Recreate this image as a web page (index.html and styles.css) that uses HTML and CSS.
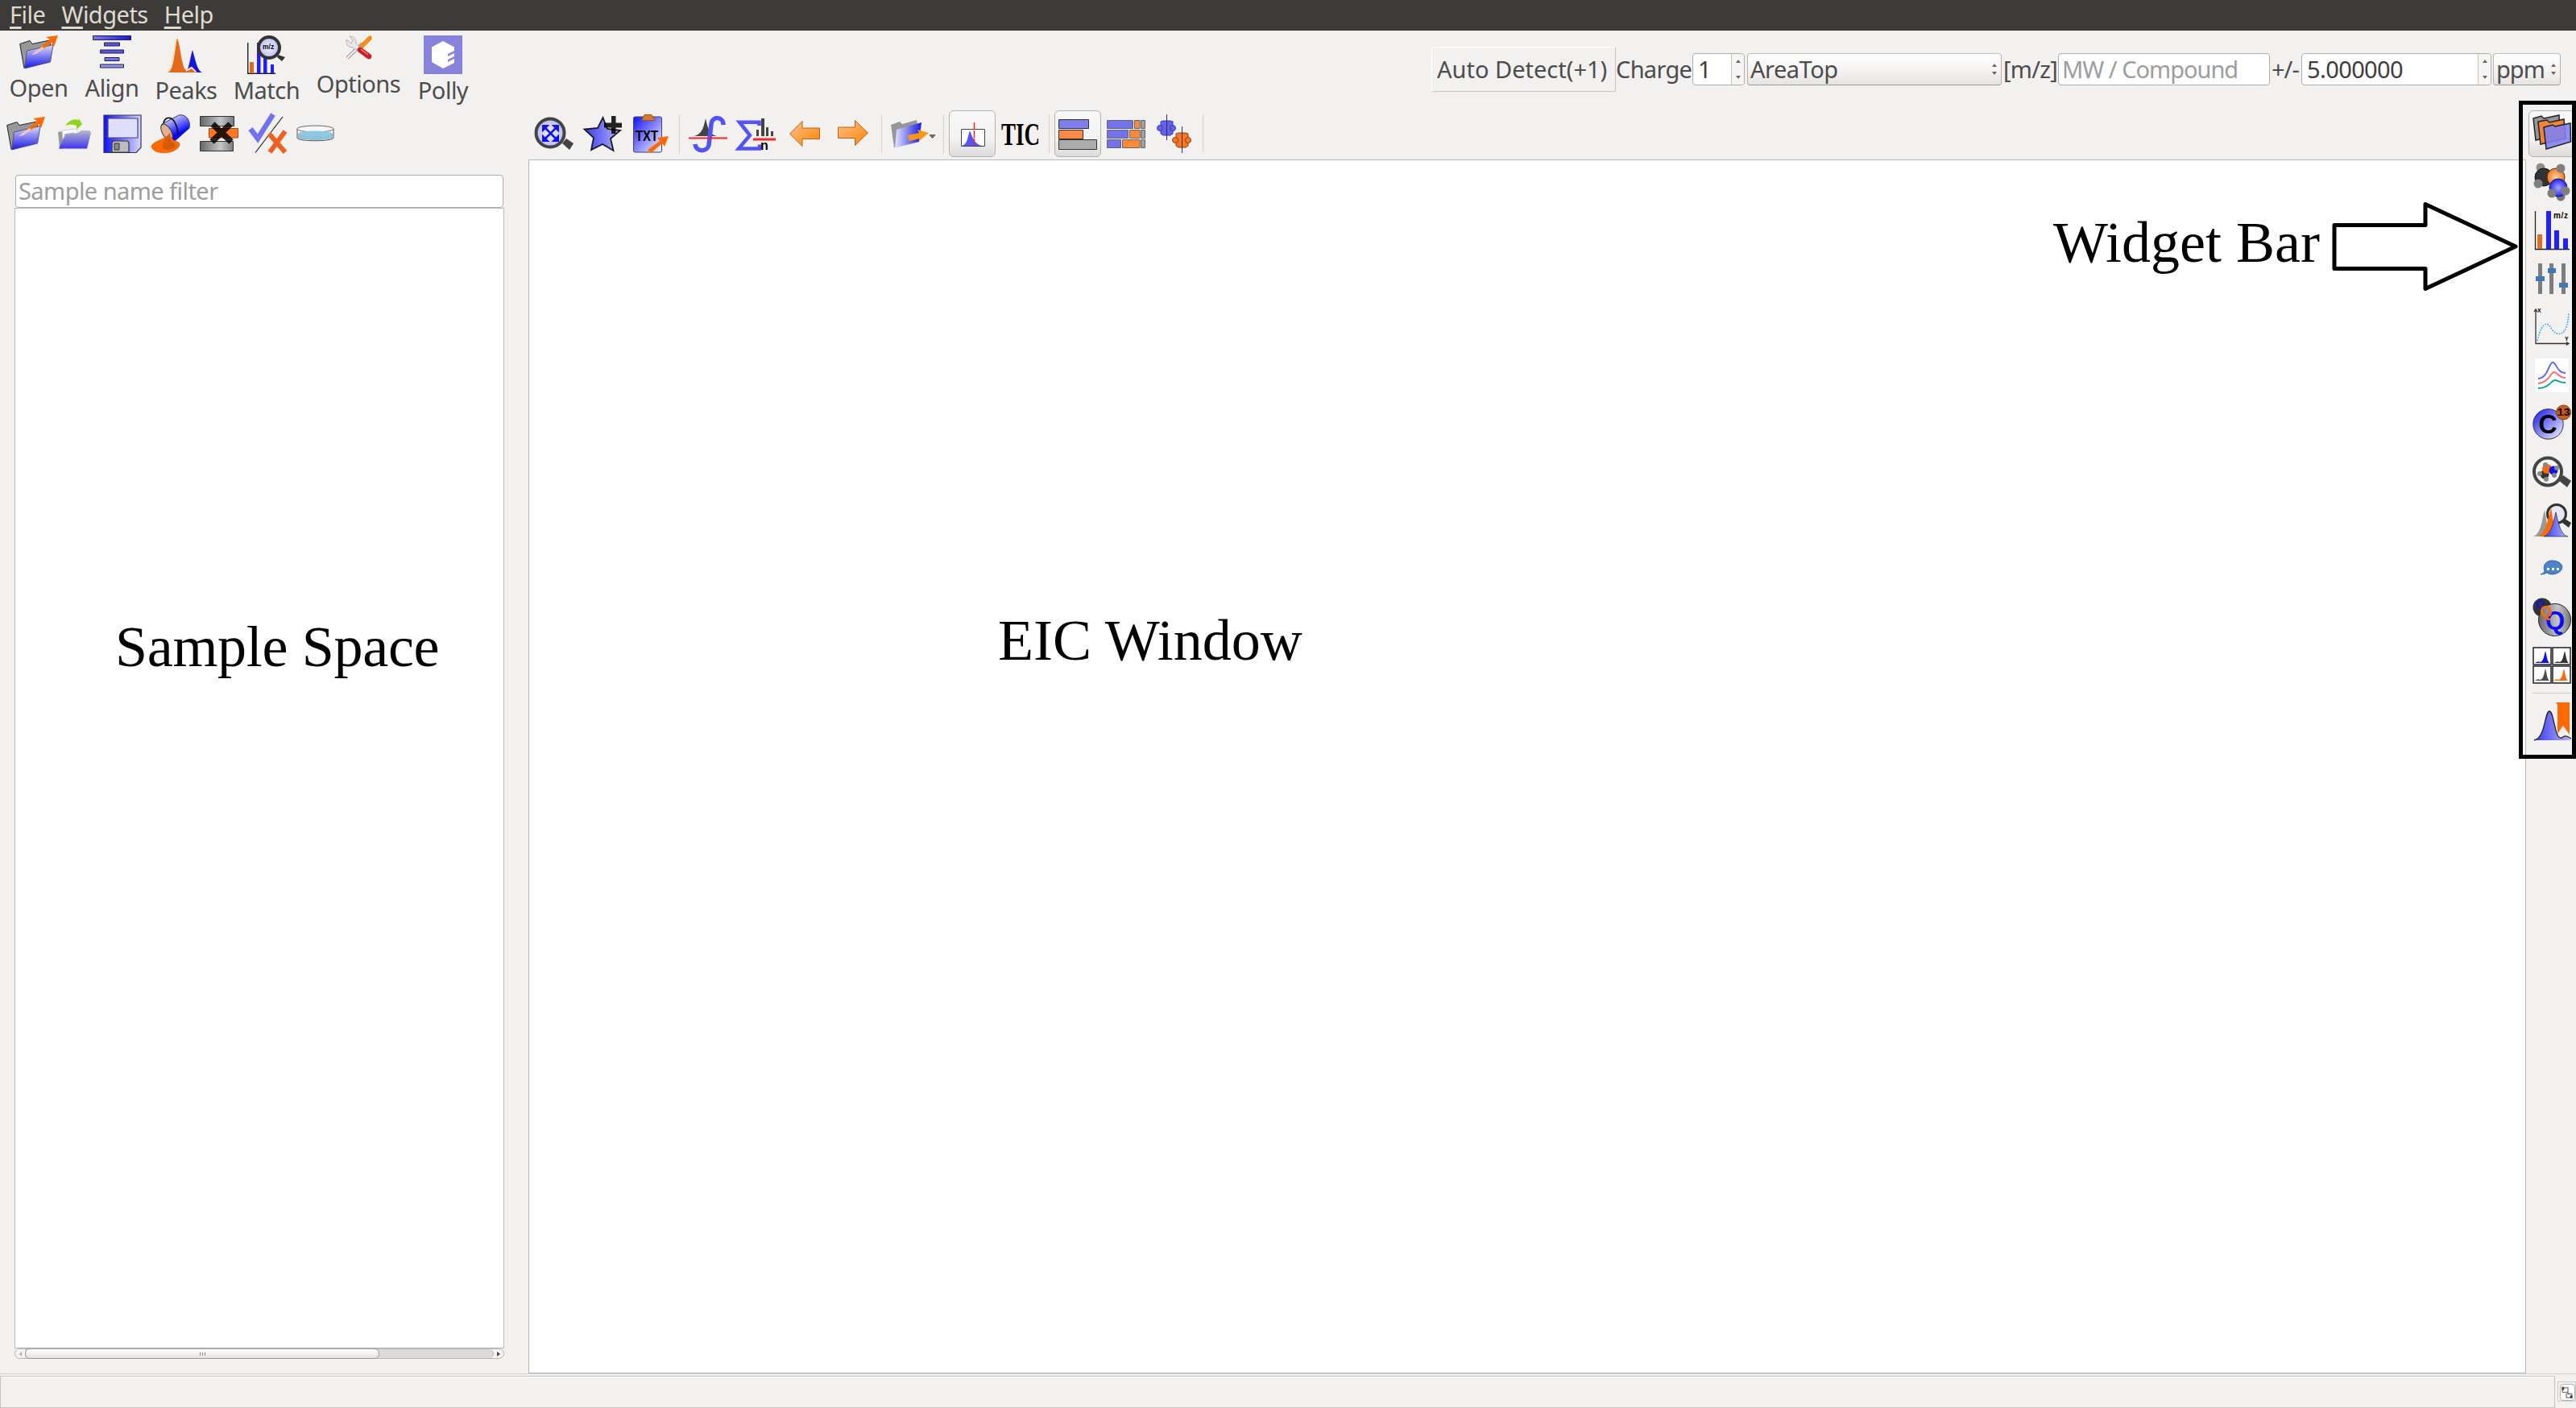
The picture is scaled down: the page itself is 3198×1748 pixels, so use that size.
FILE: index.html
```html
<!DOCTYPE html>
<html lang="en">
<head>
<meta charset="utf-8">
<title>Sample Workspace</title>
<link rel="stylesheet" href="styles.css">
</head>
<body>
<svg class="defs" width="0" height="0" aria-hidden="true">
  <defs>
    <linearGradient id="blueDown" x1="0" y1="0" x2="0" y2="1"><stop offset="0" stop-color="#dcdcfb"/><stop offset="1" stop-color="#1717e6"/></linearGradient>
    <linearGradient id="blueRight"><stop offset="0" stop-color="#1010ff"/><stop offset="1" stop-color="#d8d8fa"/></linearGradient>
    <linearGradient id="blueLeft"><stop offset="0" stop-color="#e4e4fc"/><stop offset="1" stop-color="#1818e8"/></linearGradient>
    <linearGradient id="blueDiag" x1="0" y1="0" x2="1" y2="1"><stop offset="0" stop-color="#1212ff"/><stop offset=".9" stop-color="#e2e2fa"/></linearGradient>
    <linearGradient id="star"><stop offset="0" stop-color="#3a3af0"/><stop offset="1" stop-color="#b4b4f8"/></linearGradient>
    <linearGradient id="bar"><stop offset="0" stop-color="#7a7aff"/><stop offset="1" stop-color="#1616ee"/></linearGradient>
    <linearGradient id="steel"><stop offset="0" stop-color="#666"/><stop offset=".6" stop-color="#c4c5c9"/><stop offset="1" stop-color="#77777a"/></linearGradient>
    <linearGradient id="orangeArrow" x1="0" y1="0" x2="1" y2="1"><stop offset="0" stop-color="#ffc08a"/><stop offset="1" stop-color="#f98500"/></linearGradient>
    <linearGradient id="greenFolder" x1="0" y1="0" x2="0" y2="1"><stop offset="0" stop-color="#b8b8c4"/><stop offset="1" stop-color="#4034f4"/></linearGradient>
    <linearGradient id="bucket" x1="0" y1="0" x2=".5" y2="1"><stop offset=".1" stop-color="#f0f0ff"/><stop offset=".8" stop-color="#0606ff"/></linearGradient>
    <radialGradient id="lens"><stop offset="0" stop-color="#f4f4ff"/><stop offset="1" stop-color="#b9b9f7"/></radialGradient>
    <radialGradient id="orangeBall"><stop offset="0" stop-color="#ffd2b0"/><stop offset="1" stop-color="#fb7514"/></radialGradient>
    <radialGradient id="blueBall"><stop offset="0" stop-color="#a9a9ff"/><stop offset="1" stop-color="#2626f4"/></radialGradient>
    <symbol id="openFolder" viewBox="0 0 48 48">
      <path d="M.7 13.5 13 9.5l3 4L38 9l1 8-33 26.500z" fill="#989898" stroke="#222"/>
      <path d="M9.500 22 42 14.500 38.500 36 6.500 44z" fill="url(#blueDown)" stroke="#557"/>
      <path d="m26 18 12-10-5-3 15-2-5 14-3-5-9 7z" fill="#ff6a00"/>
      <path d="m15 27 13-10 3 2-10 7z" fill="#f9c3bd"/>
    </symbol>
  </defs>
</svg>

<nav class="menubar"><span><u>F</u>ile</span><span><u>W</u>idgets</span><span><u>H</u>elp</span></nav>

<header class="topbar">
  <div class="actions">
    <div class="action open"><svg class="icon" viewBox="0 3 48 48"><use href="#openFolder" width="48" height="48"/></svg><span>Open</span></div>
    <div class="action align"><svg class="icon" viewBox="0 0 48 48"><g fill="url(#bar)" stroke="#223"><path d="M.5.5h47v5H.5z"/><path d="M14.500 9h19v4h-19zM9.500 18h29v4h-29z" fill="#5454f0"/><path d="M15 27.500h18v4H15z" fill="#7272f4"/><path d="M9.500 36h29v4h-29z" fill="#9696f6"/></g></svg><span>Align</span></div>
    <div class="action peaks low"><svg class="icon" viewBox="0 0 48 48"><path d="M22 46c6-2 6-15 10-28 4 14 6 26 12 28z" fill="#1515e0"/><path d="M1 46C9 44 9 22 13 3c5 13 5 36 11 40 4-2 5-5 7-4s5 6 8 7z" fill="#e5691b"/><path d="M12 4C8 18 8 38 2 45" fill="none" stroke="#ffe08a"/><path d="m24 44 7-4 5 5" fill="none" stroke="#fff" stroke-width="1.500"/></svg><span>Peaks</span></div>
    <div class="action match low"><svg class="icon" viewBox="0 0 48 48"><path d="M.7 9v38.300H35" fill="none" stroke="#222" stroke-width="1.400"/><path d="M3 33h5v14H3z" fill="#dc6b27"/><path d="M12 9h4.500v38H12zM20 28h4.500v19H20zM29 36h4v11h-4z" fill="#1f1fff"/><circle cx="27" cy="15" r="13" fill="url(#lens)" stroke="#333" stroke-width="4"/><path d="m38 24 9 3-4 5-6-5z" fill="#333"/><text x="19" y="17" font-size="8.500" font-weight="700">m/z</text></svg><span>Match</span></div>
    <div class="action options high"><svg class="icon" viewBox="0 0 48 48"><path d="m10 28 19-18" stroke="#777" stroke-width="4"/><path d="m10 28 19-18" stroke="#eee" stroke-width="2.500"/><path d="M9 5q-1 10 8 10l4 3 4-4-4-4Q21 1 13 1l4 5-2 4z" fill="#e8e8e8" stroke="#999" stroke-width=".7"/><path d="m25 13 12-12h3v4L28 17z" fill="#ff8c14" stroke="#c70" stroke-width=".6"/><path d="m26 18 11 8" stroke="#c81e25" stroke-width="6.500" stroke-linecap="round"/><path d="m27 17 9 7" stroke="#f08080" stroke-width="1.500"/></svg><span>Options</span></div>
    <div class="action polly low"><svg class="icon" viewBox="0 0 48 48"><path d="M0 0h48v48H0z" fill="#8783dc"/><path d="m24 7 14 7.500v4.500l-8 4v3l8-4v4l-8 4v3l8-4v5L24 41 10 33V14.500z" fill="#fff"/></svg><span>Polly</span></div>
  </div>
  <div class="query">
    <div class="detect">Auto Detect(+1)</div>
    <span class="lbl charge-l">Charge</span>
    <div class="spin charge"><span>1</span><i class="steps wide"></i></div>
    <div class="combo area"><span>AreaTop</span><i class="steps"></i></div>
    <span class="lbl mz-l">[m/z]</span>
    <div class="field compound">MW / Compound</div>
    <span class="lbl pm-l">+/-</span>
    <div class="spin tolerance"><span>5.000000</span><i class="steps wide"></i></div>
    <div class="combo unit"><span>ppm</span><i class="steps"></i></div>
  </div>
</header>

<main class="workspace">
  <aside class="samples">
    <div class="tools">
      <svg class="icon" viewBox="0 0 48 48"><use href="#openFolder" width="48" height="48"/></svg>
      <svg class="icon" viewBox="0 0 48 48"><path d="m4 22 3-1 4 2v19l-5 1z" fill="#999"/><path d="m9 20 16-2 6 6-20 14z" fill="#f8f8fa" stroke="#ccd"/><path d="m12 25 12-2M12 28l10-2" stroke="#7aa6c8"/><path d="m15 24 14-1 4-3h10l2 3-5 19.500H5L13 25z" fill="url(#greenFolder)"/><path d="M13 14q7-10 17-7l-1-3 5 8-7 7v-5q-7-3-14 0z" fill="#8fd41c"/></svg>
      <svg class="icon" viewBox="0 0 48 48"><path d="M1 1h46v40l-6 6.500H1z" fill="url(#blueRight)" stroke="#335" stroke-width="1.200"/><path d="M6 5h37v24H6z" fill="#dedefd" stroke="#446" stroke-width="1.200"/><path d="M11 47V35l2-2h17l2 2v12z" fill="#bdbdbf" stroke="#333" stroke-width="1.200"/><path d="M14 36h6v8h-6z" fill="#888" stroke="#333"/></svg>
      <svg class="icon" viewBox="0 0 48 48"><path d="M13 12 34 1c9-2 15 7 13 16L28 34z" fill="url(#bucket)" stroke="#336"/><ellipse cx="19" cy="22" rx="5.500" ry="11" transform="rotate(-30 19 22)" fill="#e4b193" stroke="#333"/><path d="M23 23c-4 8-22 10-23 17 2 9 21 10 30 4 5-3 6-7 4-9-5-3-11-3-11-12z" fill="#ff6a00" stroke="#b50" stroke-width=".6"/><path d="M22 25q-10 10-8 17 9 6 18-4-9-3-10-13z" fill="#d55c06"/><path d="M15 11c2-9 11-9 15 1 2 5 3 9 3 13" fill="none" stroke="#111" stroke-width="1.700"/></svg>
      <svg class="icon" viewBox="0 0 48 48"><path d="M.5 2.500h42v12H.5zM.5 33.500h41v12H.5z" fill="url(#steel)" stroke="#333"/><path d="M11.500 17.500h36V29h-36z" fill="#ff7620" stroke="#a54a14"/><path d="m16 12 23 22M38 12 15 34" stroke="#000" stroke-opacity=".84" stroke-width="7.500"/></svg>
      <svg class="icon" viewBox="0 0 48 48"><path d="m3 18 9 12L31 0" fill="none" stroke="#7371ef" stroke-width="6.500"/><path d="M43 3 9 47.500" stroke="#222" stroke-width="1.200"/><path d="m26 24 20 23M46 21 27 47" stroke="#ed6221" stroke-width="6"/></svg>
      <svg class="icon" viewBox="0 0 48 48"><path d="M1 18v11c0 5 45 5 45 0V18z" fill="#fbfbfb" stroke="#555"/><path d="M2 24v5c0 4 43 4 43 0v-5c-3-4-40-4-43 0z" fill="#8ec2db"/><ellipse cx="23.500" cy="18" rx="22.500" ry="4" fill="#f7f7f7" stroke="#666"/><ellipse cx="23.500" cy="24" rx="21" ry="3.500" fill="#8fc8e0"/></svg>
    </div>
    <div class="filter">Sample name filter</div>
    <div class="list"></div>
    <div class="scroll"><span class="tri left"></span><div class="track"><div class="thumb"><i></i><i></i><i></i></div></div><span class="tri right"></span></div>
    <p class="note note-samples">Sample Space</p>
  </aside>

  <section class="eic">
    <div class="tools">
      <svg class="icon" viewBox="0 0 48 48"><circle cx="19" cy="23" r="17.500" fill="url(#lens)" stroke="#444" stroke-width="4"/><path d="m34 36 5-6 9 6-5 8z" fill="#444"/><g fill="#1111ee" stroke="#1111ee" stroke-width="2"><path d="m12 16 15 15M27 16 12 31" stroke-width="2.500"/><path d="M10 14h6l-6 6zM23 14h6v6zM10 27v6h6zM29 27v6h-6z"/></g></svg>
      <svg class="icon" viewBox="0 0 48 48"><path d="m24.500 4 5.500 14 16 2-12 10 3.500 15-13.500-8L10 44l3-15L1.500 18.500 18 17z" fill="url(#star)" stroke="#1a1a22" stroke-width="1.800"/><path d="M35 2h5.500v8.500H48v6h-7.500V24H35v-7.500h-9v-6h9z" fill="#000" fill-opacity=".86"/></svg>
      <svg class="icon" viewBox="0 0 48 48"><rect x="2.500" y="3" width="35" height="44" rx="2" fill="url(#blueDiag)" stroke="#446"/><path d="M13 7.500 16 .5h9l4 7z" fill="#d57a2c" stroke="#a65312"/><text x="5" y="33" font-size="18" font-weight="700" textLength="28" lengthAdjust="spacingAndGlyphs">TXT</text><path d="m20 44 15-11-3-4 14-2-5 13-3-4-14 12z" fill="#ff6a00"/></svg>
      <i class="sep"></i>
      <svg class="icon" viewBox="0 0 48 48"><path d="M7 27c9-3 11-9 14-22 3 14 5 20 14 22z" fill="#444"/><path d="M43 13c0-11-14-11-15-1l-3 26c-2 9-16 9-17-1" fill="none" stroke="#5252fa" stroke-width="5.500"/><path d="M0 29.500h48" stroke="#f8222c" stroke-width="2.200"/></svg>
      <svg class="icon" viewBox="0 0 48 48"><path d="M27.500 14V9.700H3L16 26 2 42.500h26v-5" fill="none" stroke="#5454fa" stroke-width="4.500"/><path d="M24 19h3v8h-3zM30 5h4v22h-4zM36 16h3v11h-3zM42 21h3v6h-3z" fill="#444"/><path d="M20 31h28" stroke="#fb2429" stroke-width="3"/><text x="29" y="43.500" font-size="16" font-weight="700">n</text></svg>
      <svg class="icon" viewBox="0 0 48 48"><path d="M5.500 24 21 8.500v8.500h21.500v13.500H21v9z" fill="url(#orangeArrow)" stroke="#b8621b"/></svg>
      <svg class="icon" viewBox="0 0 48 48"><path d="M42.500 23 26.500 7.500v8.500H5.500v13.500h21v9z" fill="url(#orangeArrow)" stroke="#b8621b"/></svg>
      <i class="sep"></i>
      <svg class="icon drop" viewBox="0 0 60 48"><path d="M0 13 11 9l3 3 18-5 1 5L8 41 4 41z" fill="#969696"/><path d="M7 19 38 10 35 34 5 41.500z" fill="url(#blueLeft)"/><path d="m21 26 14-3-2-4 14 4-12 10v-3l-12 3z" fill="#fb980b"/><path d="M48 25.500h7l-3.500 4z" fill="#777" stroke="#555"/></svg>
      <i class="sep"></i>
      <div class="toggle"><svg class="icon" viewBox="0 0 48 48"><path d="M10.500 18.500h29v21h-29z" fill="#fff" stroke="#444"/><path d="M11 39c7-2 7-10 10-19 4 10 6 17 15 19z" fill="#5454fb"/><path d="M26.500 10v28" stroke="#f3232b" stroke-width="1.500" stroke-dasharray="9 1"/></svg></div>
      <svg class="icon tic" viewBox="0 0 48 48"><text x="0" y="38" font-size="40" font-weight="700" textLength="48" lengthAdjust="spacingAndGlyphs">TIC</text></svg>
      <i class="sep"></i>
      <div class="toggle"><svg class="icon" viewBox="0 0 48 48"><g stroke="#333"><path d="M.5 6.500h37v11H.5z" fill="#7d7df0"/><path d="M.5 19.500h30v11H.5z" fill="#fb8b46"/><path d="M.5 31.500h47v12H.5z" fill="#acacac"/></g></svg></div>
      <svg class="icon" viewBox="0 0 48 48"><g stroke="#666"><g fill="#7272ee"><path d="M.5 7.500h32v10H.5zM.5 19.500h26v10H.5zM.5 31.500h17v10H.5z"/></g><g fill="#ff8a36"><path d="M34.500 7.500H41v10h-6.500zM28.500 19.500H41v10H28.500zM19.500 31.500H41v10H19.500z"/></g><path d="M42.500 7.500h5v10h-5zM42.500 19.500h5v10h-5zM42.500 31.500h5v10h-5z" fill="#a0a0a0"/></g></svg>
      <svg class="icon" viewBox="0 0 48 48"><g fill="#6262ef" stroke="#3a3ab8"><path d="m7 9 3-1h9l3 1v15l-3 2h-9l-3-2z"/><circle cx="6" cy="17" r="3.500"/><circle cx="22" cy="17" r="3.500"/></g><g fill="#ff751d" stroke="#7c4424"><path d="m26 24 3-1h9l3 1v15l-3 2h-9l-3-2z"/><circle cx="25" cy="32" r="3.500"/><circle cx="41" cy="32" r="3.500"/></g><path d="M14.500 0v32M33.500 15v33" stroke="#333"/></svg>
      <i class="sep"></i>
    </div>
    <div class="plot">
      <p class="note note-eic">EIC Window</p>
      <p class="note note-bar">Widget Bar</p>
    </div>
  </section>

  <aside class="widgets">
    <div class="toggle"><svg class="icon" viewBox="0 0 48 48"><g stroke="#222" stroke-width="1.500"><path d="m1 5 10-3 3 3 19-4 1 24L4 32z" fill="#969696"/><path d="m7 9 11-2 3 3 18-4 2 24-31 7z" fill="#f5823b"/><path d="m14 16 11-3 3 2 19-4 .5 23L17 43z" fill="#7f7ff4" fill-opacity=".88"/></g></svg></div>
    <svg class="icon" viewBox="0 0 48 48"><circle cx="10" cy="6" r="5.500" fill="#8d8d8d"/><circle cx="35" cy="42" r="5.500" fill="#777"/><circle cx="14" cy="18" r="11" fill="#333" stroke="#111"/><circle cx="29" cy="18" r="11" fill="url(#orangeBall)" stroke="#523018"/><circle cx="32" cy="31" r="11" fill="url(#blueBall)" stroke="#116"/><g fill="#7f7f7f"><circle cx="35" cy="7" r="5.500"/><circle cx="7" cy="26" r="5.500"/><circle cx="24" cy="38" r="5.500"/><circle cx="41" cy="35" r="5.500"/></g></svg>
    <svg class="icon" viewBox="0 0 48 48"><path d="M3.500 0v47.500H46" fill="none" stroke="#222" stroke-width="1.300"/><path d="M6 29h6v18H6z" fill="#dc7028"/><path d="M17 0h6v47h-6zM27 24h6v23h-6zM38 34h6v13h-6z" fill="#2020ff"/><text x="26" y="8.500" font-size="10" font-weight="700" textLength="18">m/z</text></svg>
    <svg class="icon" viewBox="0 0 48 48"><path d="M7 5h5v38H7zM21 5h5v38h-5zM36 5h5v38h-5z" fill="#7d7d7d"/><path d="M4 21h11v6H4zM19 11h10v6H19zM33 29h11v6H33z" fill="#3b78b5"/></svg>
    <svg class="icon" viewBox="0 0 48 48"><path d="M4 3v41.500h40M2 5l2-3 2 3M42 42.500l3 2-3 2" fill="none" stroke="#333" stroke-width="1.300"/><text x="6" y="6" font-size="7" font-weight="700">X</text><text x="40" y="41" font-size="7" font-weight="700">Y</text><path d="M6 41C13 12 21 20 24 27c6 9 20 10 21-21" fill="none" stroke="#2ba5ed" stroke-width="1.500" stroke-dasharray="1.700 1.500"/></svg>
    <svg class="icon" viewBox="0 0 48 48"><path d="M3 3h42v42H3z" fill="#fff"/><g fill="none" stroke-width="1.900"><path d="M7 28c13-1 13-20 18-20s5 13 16 13" stroke="#6363f5"/><path d="M7 34c14-1 15-14 20-14 4 0 5 7 14 7" stroke="#fd6d6d"/><path d="M7 40c14 0 16-10 21-10 4 0 4 3 13 3" stroke="#12a28d"/></g></svg>
    <svg class="icon" viewBox="0 0 48 48"><circle cx="19.500" cy="24.500" r="18.700" fill="url(#blueDiag)" stroke="#333"/><text x="7.500" y="36" font-size="34" font-weight="700" textLength="23" lengthAdjust="spacingAndGlyphs">C</text><circle cx="38.500" cy="10" r="9" fill="#cc5d16" stroke="#7d3d13"/><text x="30.500" y="14" font-size="12" font-weight="700" textLength="16" lengthAdjust="spacingAndGlyphs">13</text></svg>
    <svg class="icon" viewBox="0 0 48 48"><circle cx="19" cy="23.500" r="17" fill="#f5f5f7" stroke="#444" stroke-width="4"/><path d="m32 34 6-6 10 7-5 8z" fill="#444"/><circle cx="15" cy="27" r="5.500" fill="#333"/><circle cx="18" cy="20" r="6" fill="#ff6a00"/><circle cx="26" cy="22" r="5.500" fill="#1111f0"/><g fill="#888"><circle cx="16" cy="15" r="3"/><circle cx="9" cy="26" r="3"/><circle cx="17" cy="33" r="3"/><circle cx="27" cy="28" r="3"/><circle cx="30" cy="19" r="3"/></g></svg>
    <svg class="icon" viewBox="0 0 48 48"><circle cx="30" cy="16" r="11.500" fill="#e7e7f5" stroke="#333" stroke-width="3"/><path d="m37 27 3-5 8 5-3 6z" fill="#333"/><path d="M1 44c10-4 10-18 14-33 3 16 4 29 12 33z" fill="#999"/><path d="M7 44c10-4 12-21 16-36 3 17 3 30 11 36z" fill="#ff6a00"/><path d="M14 44c9-3 11-14 15-30 4 18 7 28 15 30z" fill="url(#star)" stroke="#335" stroke-width=".8"/></svg>
    <svg class="icon" viewBox="0 0 48 48"><path d="M10 31q5-1 5-4c-3-8 3-13 9-13 17 0 17 16 0 17q-4 0-6-2-4 2-8 2z" fill="#4c82cb" stroke="#2d619f"/><path d="M18 23h3v3h-3zM24 23h3v3h-3zM30 23h3v3h-3z" fill="#fff"/></svg>
    <svg class="icon" viewBox="0 0 48 48"><circle cx="12" cy="12" r="11.500" fill="#333"/><circle cx="27.500" cy="27.500" r="20" fill="url(#steel)" stroke="#222"/><text x="16" y="39" font-size="31" font-weight="700" fill="#0a0aff">Q</text><text x="4" y="13" font-size="14" font-weight="700" fill="#1111e0">Q</text><text x="9" y="24" font-size="20" font-weight="700" fill="#ff6a00">Q</text></svg>
    <svg class="icon" viewBox="0 0 48 48"><g fill="#fff" stroke="#222" stroke-width="1.500"><path d="M1 2h22v21H1zM25 2h22v21H25zM1 25h22v21H1zM25 25h22v21H25z"/></g><path d="M3 21q4-3 6-1c5-1 5-7 7-14 2 7 2 13 5 15z" fill="#1111ee"/><path d="M27 21q4-3 6-1c5-1 5-7 7-14 2 7 2 13 5 15z" fill="#333"/><path d="M3 43q4-3 6-1c5-1 5-7 7-14 2 7 2 13 5 15z" fill="#4c4c4c"/><path d="M26 43q4-3 6-1c5-1 5-7 7-14 2 7 2 13 5 15z" fill="#ff6a00"/></svg>
    <i class="hsep"></i>
    <svg class="icon" viewBox="0 0 48 48"><path d="M2 47c14-2 13-36 19-36s6 35 15 33c4-3 6-3 12 3z" fill="url(#star)"/><path d="M2 47c14-2 13-36 19-36s6 35 15 33c4-3 6-3 12 1" fill="none" stroke="#222" stroke-width="1.300"/><path d="M29 0h17v40l-8-11-7 10V3z" fill="#ff6a00"/></svg>
  </aside>

  <div class="frame"></div>
  <svg class="arrow" viewBox="0 0 236 120"><path d="M5 31.500h113V5.500L230 58 118 110.500V85.500H5z" fill="#fff" stroke="#000" stroke-width="5" stroke-linejoin="round"/></svg>
</main>

<footer class="status"><div class="message"></div><div class="grip"><div class="grip-btn"><svg viewBox="0 0 16 20"><path d="M2 4h7v6H2zM7 12h7v5H7zM8 9l3 4" fill="none" stroke="#777" stroke-width="1.300"/><path d="M1 3h3v4H1zM12 14h3v4h-3z" fill="#444"/></svg></div></div></footer>
</body>
</html>
```
FILE: styles.css
```css
* { box-sizing: border-box; }
html, body { margin: 0; height: 100%; }
body {
  display: flex;
  flex-direction: column;
  height: 1748px;
  overflow: hidden;
  background: #f2f1f0;
  color: #4c4c4c;
  font: 29px/34px "Noto Sans", sans-serif;
  letter-spacing: -.5px;
  white-space: nowrap;
}
.defs { position: absolute; }
.icon { display: block; flex: none; width: 48px; height: 48px; overflow: visible; font-family: "Liberation Sans", sans-serif; letter-spacing: 0; }
.icon text:not([fill]) { fill: #000; }

.menubar {
  flex: none;
  display: flex;
  gap: 20px;
  height: 38px;
  padding-left: 12px;
  background: #3c3b37;
  color: #dfdbd2;
  line-height: 36px;
}
.menubar u { text-decoration-thickness: 3px; text-underline-offset: 4px; }

.topbar { flex: none; display: flex; justify-content: space-between; height: 96px; }
.actions { display: flex; padding-top: 6px; }
.action { display: flex; flex-direction: column; align-items: center; }
.action.open { width: 96px; }
.action.align { width: 86px; }
.action.peaks { width: 98px; }
.action.match { width: 102px; }
.action.options { width: 126px; }
.action.polly { width: 84px; }
.action.low span { margin-top: 3px; }
.action.high span { margin-top: -5px; }

.query { display: flex; align-items: center; padding-right: 19px; }
.detect {
  width: 229px;
  height: 56px;
  padding: 10px 0 0 6px;
  border: 1px solid;
  border-color: #fff #c8c6c4 #c8c6c4 #fff;
  letter-spacing: 0;
}
.lbl { display: block; }
.charge-l { width: 95px; padding-left: 0; letter-spacing: -.700px; }
.mz-l { width: 70px; padding-left: 2px; letter-spacing: -.700px; }
.pm-l { width: 39px; padding-left: 2px; letter-spacing: -1px; }
.field, .spin, .combo, .filter {
  height: 40px;
  border: 1px solid #b1ada8;
  border-radius: 4px;
  background: #fff;
  line-height: 38px;
}
.field, .filter { color: #9d9d9d; padding-left: 4px; }
.compound { width: 263px; letter-spacing: -1px; }
.spin, .combo { display: flex; justify-content: space-between; padding-left: 6px; color: #3c3c3c; }
.charge { width: 65px; margin-right: 3px; }
.area { width: 316px; }
.tolerance { width: 236px; margin-right: 2px; letter-spacing: -.600px; }
.unit { width: 84px; letter-spacing: -1px; }
.combo { padding-left: 3px; color: #4c4c4c; background: linear-gradient(#fff, #f4f3f2 55%, #e6e4e2); border-color: #c2beba #b6b2ae #999; }
.steps {
  display: flex;
  flex-direction: column;
  justify-content: center;
  align-items: center;
  gap: 6px;
  width: 17px;
}
.steps::before, .steps::after { content: ""; border: 3px solid transparent; border-top-width: 0; border-bottom: 4px solid #666; }
.steps::after { border-bottom-width: 0; border-top: 4px solid #666; }
.steps.wide { gap: 16px; width: 16px; border-left: 1px solid #c6c3c0; background: #f6f5f4; border-radius: 0 4px 4px 0; }

.workspace { position: relative; flex: 1; display: flex; min-height: 0; }
.tools { display: flex; gap: 12px; height: 56px; }
.samples { display: flex; flex-direction: column; width: 656px; padding: 8px 30px 18px 18px; }
.samples .tools { flex: none; height: 75px; margin-left: -10px; }
.filter { flex: none; margin: 0 1px; width: 606px; height: 41px; padding-left: 3px; letter-spacing: -.550px; }
.list { flex: 1; border: 1px solid #bcb8b3; background: #fff; }
.scroll {
  flex: none;
  display: flex;
  height: 13px;
  border: 1px solid #bab6b1;
  border-radius: 7px;
  background: #f4f3f2;
}
.tri { display: flex; align-items: center; justify-content: center; width: 12px; }
.tri::before { content: ""; border: 3px solid transparent; }
.tri.left::before { border-right: 3px solid #aaa; border-left: 0; }
.tri.right::before { border-left: 4px solid #444; border-right: 0; }
.track { flex: 1; background: #dcdbd9; border-radius: 0 6px 6px 0; border-right: 1px solid #bbb; }
.thumb {
  display: flex;
  justify-content: center;
  align-items: center;
  gap: 2px;
  width: 440px;
  height: 13px;
  margin-top: -1px;
  border: 1px solid #9c9893;
  border-radius: 6px;
  background: linear-gradient(#fff, #e4e3e1);
}
.thumb i { width: 1px; height: 4px; background: #888; }

.eic { flex: 1; display: flex; flex-direction: column; }
.eic .tools { flex: none; height: 64px; padding: 8px 0 0 8px; }
.sep { width: 1px; height: 48px; margin: 0 -1px 0 -1px; background: #d4d2d0; }
.icon.drop { width: 60px; margin-right: -6px; }
.toggle {
  flex: none;
  width: 58px;
  height: 58px;
  margin: -5px;
  padding: 4px;
  border: 1px solid #b5b1ad;
  border-radius: 6px;
  background: linear-gradient(#f8f8f8, #f3f2f1 60%, #dddcda);
}
.icon.tic { font-family: "Liberation Serif", serif; }
.plot { flex: 1; border: 1px solid #bcb8b3; background: #fff; }

.widgets { display: flex; flex-direction: column; gap: 12px; width: 62px; padding: 8px 0 0 8px; overflow: hidden; }
.hsep { height: 1px; margin: -2px 6px -1px 0; background: #ccc; }

.note {
  position: absolute;
  margin: 0;
  color: #000;
  font: 72px/84px "Liberation Serif", serif;
  letter-spacing: 0;
}
.note-samples { left: 143px; top: 627px; letter-spacing: -.300px; }
.note-eic { left: 1239px; top: 619px; }
.note-bar { left: 2549px; top: 125px; }
.frame { position: absolute; left: 3127px; top: -9px; width: 71px; height: 817px; border: 5px solid #000; }
.arrow { position: absolute; left: 2893px; top: 114px; width: 236px; height: 120px; }

.status { flex: none; display: flex; justify-content: space-between; height: 43px; padding-top: 2px; border-top: 1px solid #d5d3d1; }
.message { width: 3172px; border: 1px solid #c5c2bf; box-shadow: inset 0 1px #fff; }
.grip { width: 23px; height: 25px; margin-top: 7px; padding: 2px; border: 1px solid #ccc; }
.grip-btn { width: 19px; height: 21px; border: 1px solid #b5b1ad; border-radius: 4px; background: #fbfbfb; }
.grip-btn svg { display: block; width: 16px; height: 19px; }
```
